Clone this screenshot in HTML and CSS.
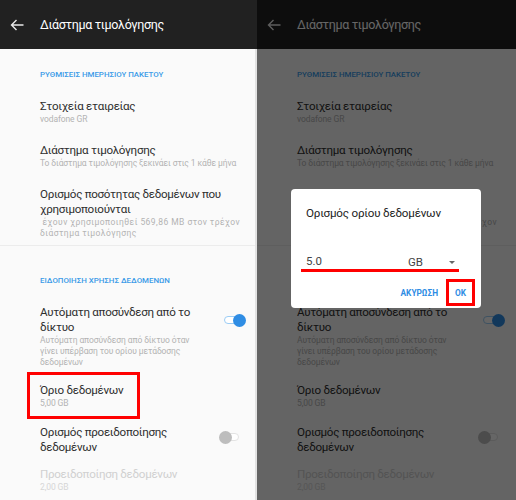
FILE: index.html
```html
<!DOCTYPE html>
<html lang="el">
<head>
<meta charset="utf-8">
<title>Διάστημα τιμολόγησης</title>
<link rel="stylesheet" href="styles.css">
</head>
<body>
<div class="shots">
  <section class="phone left">
    <header class="appbar">
      <svg class="back" width="14" height="12" viewBox="0 0 14 12"><path d="M13.5 6H1.5M6.5 1L1.5 6l5 5" fill="none" stroke="currentColor" stroke-width="1.4"/></svg>
      <h1 class="appbar-title">Διάστημα τιμολόγησης</h1>
    </header>
    <div class="content">
      <div class="cat first">ΡΥΘΜΙΣΕΙΣ ΗΜΕΡΗΣΙΟΥ ΠΑΚΕΤΟΥ</div>
      <div class="item"><div class="text"><div class="title">Στοιχεία εταιρείας</div><div class="sub">vodafone GR</div></div></div>
      <div class="item"><div class="text"><div class="title">Διάστημα τιμολόγησης</div><div class="sub">Το διάστημα τιμολόγησης ξεκινάει στις 1 κάθε μήνα</div></div></div>
      <div class="item last"><div class="text"><div class="title">Ορισμός ποσότητας δεδομένων που χρησιμοποιούνται</div><div class="sub wide">&nbsp;έχουν χρησιμοποιηθεί 569,86 MB στον τρέχον διάστημα τιμολόγησης</div></div></div>
      <div class="divider"></div>
      <div class="cat">ΕΙΔΟΠΟΙΗΣΗ ΧΡΗΣΗΣ ΔΕΔΟΜΕΝΩΝ</div>
      <div class="item last"><div class="text"><div class="title">Αυτόματη αποσύνδεση από το δίκτυο</div><div class="sub narrow">Αυτόματη αποσύνδεση από δίκτυο όταν γίνει υπέρβαση του ορίου μετάδοσης δεδομένων</div></div><span class="toggle on"></span></div>
      <div class="item"><div class="text"><div class="title">Όριο δεδομένων</div><div class="sub">5,00 GB</div></div></div>
      <div class="item tight"><div class="text"><div class="title short">Ορισμός προειδοποίησης δεδομένων</div></div><span class="toggle off"></span></div>
      <div class="item disabled"><div class="text"><div class="title">Προειδοποίηση δεδομένων</div><div class="sub">2,00 GB</div></div></div>
    </div>
    <div class="scrollbar"></div>
    <div class="mark mark-item"></div>
  </section>

  <section class="phone right">
    <header class="appbar">
      <svg class="back" width="14" height="12" viewBox="0 0 14 12"><path d="M13.5 6H1.5M6.5 1L1.5 6l5 5" fill="none" stroke="currentColor" stroke-width="1.4"/></svg>
      <h1 class="appbar-title">Διάστημα τιμολόγησης</h1>
    </header>
    <div class="content">
      <div class="cat first">ΡΥΘΜΙΣΕΙΣ ΗΜΕΡΗΣΙΟΥ ΠΑΚΕΤΟΥ</div>
      <div class="item"><div class="text"><div class="title">Στοιχεία εταιρείας</div><div class="sub">vodafone GR</div></div></div>
      <div class="item"><div class="text"><div class="title">Διάστημα τιμολόγησης</div><div class="sub">Το διάστημα τιμολόγησης ξεκινάει στις 1 κάθε μήνα</div></div></div>
      <div class="item last"><div class="text"><div class="title">Ορισμός ποσότητας δεδομένων που χρησιμοποιούνται</div><div class="sub wide">&nbsp;έχουν χρησιμοποιηθεί 569,86 MB στον τρέχον διάστημα τιμολόγησης</div></div></div>
      <div class="divider"></div>
      <div class="cat">ΕΙΔΟΠΟΙΗΣΗ ΧΡΗΣΗΣ ΔΕΔΟΜΕΝΩΝ</div>
      <div class="item last"><div class="text"><div class="title">Αυτόματη αποσύνδεση από το δίκτυο</div><div class="sub narrow">Αυτόματη αποσύνδεση από δίκτυο όταν γίνει υπέρβαση του ορίου μετάδοσης δεδομένων</div></div><span class="toggle on"></span></div>
      <div class="item"><div class="text"><div class="title">Όριο δεδομένων</div><div class="sub">5,00 GB</div></div></div>
      <div class="item tight"><div class="text"><div class="title short">Ορισμός προειδοποίησης δεδομένων</div></div><span class="toggle off"></span></div>
      <div class="item disabled"><div class="text"><div class="title">Προειδοποίηση δεδομένων</div><div class="sub">2,00 GB</div></div></div>
    </div>
    <div class="scrim"></div>
    <div class="dialog">
      <div class="dialog-title">Ορισμός ορίου δεδομένων</div>
      <div class="field-row">
        <span class="field">5.0</span>
        <span class="unit">GB</span>
        <span class="caret"></span>
      </div>
      <div class="actions">
        <span class="btn">ΑΚΥΡΩΣΗ</span>
        <span class="btn ok">OK</span>
      </div>
      <div class="mark mark-line"></div>
      <div class="mark mark-ok"></div>
    </div>
  </section>
</div>
</body>
</html>
```

FILE: styles.css
```css
* { box-sizing: border-box; }
html, body { margin: 0; padding: 0; }
body {
  font-family: Roboto, "Noto Sans", "DejaVu Sans", sans-serif;
  background: #fafafa;
  width: 516px;
  height: 500px;
  overflow: hidden;
}
.shots {
  display: flex;
  width: 516px;
  height: 500px;
}
.phone {
  position: relative;
  height: 500px;
  overflow: hidden;
  background: #fafafa;
}
.phone.left { width: 257px; }
.phone.right { width: 259px; }

.appbar {
  height: 49px;
  background: #212121;
  display: flex;
  align-items: center;
  color: #fff;
}
.back {
  margin-left: 10px;
  margin-right: 16px;
  color: #e8e8e8;
  flex: none;
}
.appbar-title {
  margin: 0;
  font-size: 12.5px;
  font-weight: 400;
  letter-spacing: -0.35px;
  color: #fff;
}

.content {
  padding-left: 40px;
  padding-right: 12px;
}
.cat {
  color: #3a9be8;
  font-size: 7.9px;
  font-weight: 500;
  line-height: 12px;
  padding-top: 29px;
  padding-bottom: 9px;
}
.cat.first { padding-top: 20px; }

.item {
  display: flex;
  align-items: flex-start;
  padding: 9px 0;
}
.item.first-item { padding-top: 10px; }
.item.last { padding-bottom: 6px; }
.item.tight { padding-top: 7px; padding-bottom: 2.5px; align-items: center; }
.text { flex: 1; min-width: 0; }
.title {
  font-size: 11.6px;
  line-height: 15px;
  letter-spacing: -0.3px;
  color: #2e2e2e;
}
.title.short { max-width: 170px; }
.sub {
  font-size: 8.5px;
  line-height: 11px;
  letter-spacing: -0.1px;
  color: #b3b3b3;
}
.sub.wide { max-width: 200px; letter-spacing: 0.45px; }
.sub.narrow { max-width: 160px; }
.item.disabled .title { color: #d0d0d0; }
.item.disabled .sub { color: #d6d6d6; }

.divider {
  height: 1px;
  background: #ececec;
  margin-left: -40px;
  margin-right: -12px;
}

.toggle {
  position: relative;
  flex: none;
  width: 21px;
  height: 13px;
}
.toggle::before {
  content: "";
  position: absolute;
  left: 0;
  top: 2.5px;
  width: 20px;
  height: 8px;
  border-radius: 4px;
  box-sizing: border-box;
}
.toggle::after {
  content: "";
  position: absolute;
  top: 0;
  width: 13px;
  height: 13px;
  border-radius: 50%;
}
.toggle.on { margin-top: 8.5px; margin-right: 0; }
.toggle.on::before { border: 1.5px solid #9ccdf5; background: #fff; }
.toggle.on::after { left: 9px; background: #2f8de4; }
.toggle.off { margin-right: 5px; margin-bottom: 6px; }
.toggle.off::before { left: 1px; width: 19px; border: 1.5px solid #e3e3e3; background: #fff; }
.toggle.off::after { left: 0; background: #bdbdbd; }

.scrollbar {
  position: absolute;
  right: 0;
  top: 49px;
  width: 2px;
  height: 451px;
  background: #e2e2e2;
}

.scrim {
  position: absolute;
  inset: 0;
  background: rgba(0, 0, 0, 0.6);
}

.dialog {
  position: absolute;
  left: 34px;
  top: 189px;
  width: 190px;
  height: 119px;
  background: #fff;
  border-radius: 4px;
  padding: 0 14px 0 15px;
}
.dialog-title {
  font-size: 11.6px;
  line-height: 16px;
  letter-spacing: -0.2px;
  color: #222;
  padding-top: 16px;
}
.field-row {
  display: flex;
  align-items: center;
  margin-top: 32px;
  height: 18px;
}
.field {
  width: 96px;
  font-size: 11.5px;
  color: #444;
  line-height: 16px;
  height: 18px;
  border-bottom: 1px solid #e0e0e0;
  margin-left: -5px;
  padding-left: 5px;
}
.unit {
  margin-left: 11px;
  font-size: 11.5px;
  color: #444;
  flex: 1;
  line-height: 16px;
}
.caret {
  width: 0;
  height: 0;
  border-left: 3.5px solid transparent;
  border-right: 3.5px solid transparent;
  border-top: 3.5px solid #666;
  margin-right: 12px;
}
.actions {
  display: flex;
  justify-content: flex-end;
  align-items: center;
  margin-top: 16px;
  gap: 17px;
  padding-right: 1px;
}
.btn {
  color: #2f8de4;
  font-size: 8.3px;
  font-weight: 700;
  line-height: 12px;
}

.mark {
  position: absolute;
  border: 3px solid #ff0000;
}
.mark-item {
  left: 27px;
  top: 372px;
  width: 113px;
  height: 47px;
}
.mark-line {
  left: 10px;
  top: 80px;
  width: 158px;
  height: 3px;
  border: 0;
  background: #ff0000;
}
.mark-ok {
  left: 155px;
  top: 90px;
  width: 29px;
  height: 27px;
}
```
